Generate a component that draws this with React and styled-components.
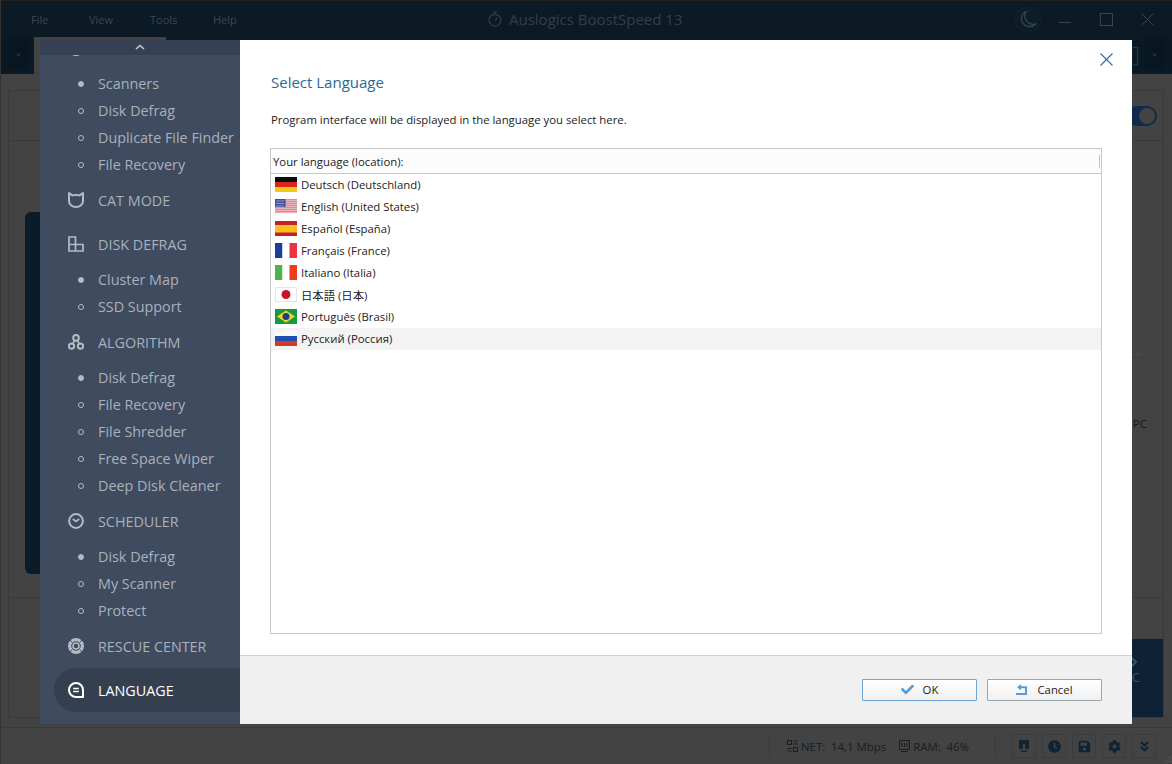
import React from "react";
import styled, { createGlobalStyle } from "styled-components";
import { FaClock, FaSave, FaCog, FaAngleDoubleDown, FaCheck } from "react-icons/fa";

const Global = createGlobalStyle`
  html, body { margin: 0; padding: 0; background: #434343; }
  * { box-sizing: border-box; }
  body { font-family: "Open Sans", "Noto Sans CJK JP", sans-serif; }
`;

const Page = styled.div`
  position: relative;
  width: 1172px;
  height: 764px;
  overflow: hidden;
  display: flex;
  flex-direction: column;
  background: #434343;
  border-left: 1px solid #333;
`;

/* ---------- dimmed application behind the dialog ---------- */
const TitleBar = styled.header`
  height: 37px;
  flex: none;
  display: flex;
  align-items: center;
  background: #0b1a24;
  border-top: 1px solid #222;
  position: relative;
`;
const Menu = styled.nav`
  display: flex;
  padding-left: 30px;
  font-size: 11px;
  color: #3a4850;
`;
const MenuItem = styled.span`
  width: ${(p) => p.$w}px;
`;
const AppTitle = styled.div`
  position: absolute;
  left: 487px;
  top: 8px;
  display: flex;
  align-items: center;
  gap: 7px;
  font-size: 15px;
  color: #333f47;
  svg { flex: none; }
`;
const WinControls = styled.div`
  margin-left: auto;
  display: flex;
  align-items: center;
  padding-right: 18px;
  color: #38454d;
`;
const WinIcon = styled.svg`
  margin-left: ${(p) => p.$ml || 0}px;
`;
const Toolbar = styled.div`
  height: 37px;
  flex: none;
  display: flex;
  align-items: stretch;
  background: #0a1924;
  padding-left: 7px;
`;
const ToolEnd = styled.div`
  width: 20px;
  height: 33px;
  background: #071621;
  display: flex;
  align-items: center;
  justify-content: center;
  color: #26323a;
  font-size: 8px;
`;
const ActiveTab = styled.div`
  width: 132px;
  margin-left: 6px;
  background: #434343;
`;
const ToolGrow = styled.div`
  flex: 1;
  display: flex;
  justify-content: flex-end;
  align-items: flex-start;
  padding: 9px 5px 0 0;
  color: #1f3646;
`;
const ToolRight = styled(ToolEnd)`
  width: 21px;
  margin-right: 7px;
`;
const Content = styled.main`
  flex: 1;
  min-height: 0;
  padding: 16px 8px 9px 7px;
  display: flex;
`;
const Panel = styled.div`
  flex: 1;
  border: 1px solid #3a3a3a;
  display: flex;
  flex-direction: column;
`;
const PanelTop = styled.div`
  height: 50px;
  flex: none;
  border-bottom: 1px solid #3a3a3a;
  display: flex;
  justify-content: flex-end;
  align-items: flex-start;
  padding: 15px 6px 0 0;
`;
const Toggle = styled.div`
  width: 30px;
  height: 20px;
  border-radius: 10px;
  background: #0f2a4a;
  position: relative;
  &::after {
    content: "";
    position: absolute;
    right: 2px;
    top: 2px;
    width: 16px;
    height: 16px;
    border-radius: 50%;
    background: #434343;
  }
`;
const PanelMid = styled.div`
  flex: 1;
  border-bottom: 1px solid #3a3a3a;
  display: flex;
  justify-content: space-between;
  padding: 71px 16px 23px 16px;
`;
const DarkCard = styled.div`
  width: 300px;
  border-radius: 6px;
  background: #0b1c28;
`;
const RightCol = styled.div`
  display: flex;
  flex-direction: column;
  align-items: flex-end;
`;
const MidRule = styled.span`
  width: 8px;
  height: 1px;
  margin: 142px 6px 0 0;
  background: #4f4f4f;
`;
const PcLabel = styled.div`
  font-size: 11.5px;
  line-height: 16px;
  color: #15191c;
  margin-top: 61px;
`;
const PanelBottom = styled.div`
  height: 119px;
  flex: none;
  display: flex;
  justify-content: flex-end;
  align-items: flex-end;
`;
const BlueTile = styled.div`
  width: 131px;
  height: 78px;
  background: #0f2235;
  display: flex;
  flex-direction: column;
  align-items: flex-end;
  padding: 17px 23px 0 0;
  color: #3c5064;
  font-size: 13px;
  line-height: 18px;
`;
const StatusBar = styled.footer`
  height: 37px;
  flex: none;
  border-top: 1px solid #3a3a3a;
  display: flex;
  align-items: center;
  justify-content: flex-end;
  padding-right: 16px;
  font-size: 11.4px;
  color: #131e26;
  position: relative;
`;
const StatDivider = styled.span`
  width: 1px;
  height: 26px;
  background: #3a3a3a;
  margin-right: ${(p) => p.$mr}px;
`;
const Stat = styled.span`
  display: flex;
  align-items: center;
  gap: 3px;
  margin-right: ${(p) => p.$mr}px;
  svg { flex: none; }
`;
const StatusButtons = styled.div`
  display: flex;
  gap: 6px;
`;
const StatusButton = styled.span`
  width: 24px;
  height: 24px;
  border: 1px solid #3b3b3b;
  border-radius: 2px;
  display: flex;
  align-items: center;
  justify-content: center;
  color: #0e2434;
  font-size: 13px;
`;
const Grip = styled.svg`
  position: absolute;
  right: 0;
  bottom: 1px;
`;

/* ---------- dialog ---------- */
const Dialog = styled.section`
  position: absolute;
  left: 39px;
  top: 40px;
  width: 1092px;
  height: 684px;
  display: flex;
`;
const Sidebar = styled.aside`
  width: 200px;
  flex: none;
  background: #3f4b5e;
  display: flex;
  flex-direction: column;
`;
const ScrollStrip = styled.div`
  height: 15px;
  flex: none;
  background: #364253;
  display: flex;
  justify-content: center;
  padding-top: 4px;
`;
const SideScroll = styled.div`
  flex: 1;
  min-height: 0;
  overflow: hidden;
`;
const SideList = styled.div`
  margin-top: -29px;
`;
const Heading = styled.div`
  height: 44px;
  display: flex;
  align-items: center;
  margin-left: ${(p) => (p.$active ? 14 : 0)}px;
  padding-left: ${(p) => (p.$active ? 14 : 28)}px;
  gap: 14px;
  font-size: 14.35px;
  color: ${(p) => (p.$active ? "#ffffff" : "#a9b1bd")};
  background: ${(p) => (p.$active ? "#343f4f" : "transparent")};
  border-radius: ${(p) => (p.$active ? "22px 0 0 22px" : "0")};
  svg { flex: none; }
`;
const SubItem = styled.div`
  height: 27px;
  display: flex;
  align-items: center;
  padding-left: 38px;
  gap: 14px;
  font-size: 14.35px;
  color: #a9b1bd;
`;
const Dot = styled.i`
  width: 6px;
  height: 6px;
  flex: none;
  border-radius: 50%;
  border: 1px solid #b4bbc6;
  background: ${(p) => (p.$filled ? "#b4bbc6" : "transparent")};
`;
const Main = styled.div`
  flex: 1;
  min-width: 0;
  display: flex;
  flex-direction: column;
  background: #ffffff;
  position: relative;
`;
const CloseBtn = styled.svg`
  position: absolute;
  right: 19px;
  top: 13px;
`;
const Body = styled.div`
  flex: 1;
  min-height: 0;
  padding: 31px 30px 21px 30px;
  display: flex;
  flex-direction: column;
`;
const Title = styled.h1`
  margin: 0 0 0 1px;
  font-size: 15px;
  line-height: 22px;
  font-weight: 400;
  color: #2a6a96;
`;
const Lead = styled.p`
  margin: 19px 0 20px 1px;
  font-size: 11.35px;
  line-height: 16px;
  color: #222222;
`;
const ListBox = styled.div`
  flex: 1;
  min-height: 0;
  border: 1px solid #c8c8c8;
  display: flex;
  flex-direction: column;
`;
const ListHead = styled.div`
  height: 25px;
  flex: none;
  padding-left: 2px;
  display: flex;
  align-items: center;
  justify-content: space-between;
  font-size: 11.35px;
  color: #222222;
  background: #fcfcfc;
  border-bottom: 1px solid #c8c8c8;
`;
const HeadGrip = styled.i`
  width: 1px;
  height: 13px;
  background: #c4c4c4;
  margin: 0 1px 0 0;
`;
const Row = styled.div`
  height: 22px;
  display: flex;
  align-items: center;
  gap: 4px;
  padding: 0 0 1px 4px;
  font-size: 11.35px;
  color: #222222;
  background: ${(p) => (p.$selected ? "#f3f3f3" : "transparent")};
  svg { flex: none; }
`;
const Footer = styled.div`
  height: 69px;
  flex: none;
  background: #f0f0f0;
  border-top: 1px solid #d2d2d2;
  display: flex;
  justify-content: flex-end;
  padding: 23px 30px 0 0;
  gap: 10px;
`;
const Button = styled.button`
  width: 115px;
  height: 22px;
  padding: 0 0 2px;
  border: 1px solid ${(p) => (p.$primary ? "#6ea6d6" : "#9aa6b0")};
  border-radius: 1px;
  background: linear-gradient(#ffffff, #f0f0f0);
  display: flex;
  align-items: center;
  justify-content: center;
  gap: ${(p) => (p.$primary ? 9 : 10)}px;
  font-family: inherit;
  font-size: 11.35px;
  color: #222222;
  svg { flex: none; color: #5b9bd5; }
`;

/* ---------- drawings ---------- */
const Flag = ({ children }) => (
  <svg width="22" height="15" viewBox="0 0 22 15">{children}</svg>
);
const H3 = ({ a, b, c }) => (
  <Flag>
    <rect width="22" height="5" fill={a} />
    <rect y="5" width="22" height="5" fill={b} />
    <rect y="10" width="22" height="5" fill={c} />
  </Flag>
);
const V3 = ({ a, b, c }) => (
  <Flag>
    <rect width="7.5" height="15" fill={a} />
    <rect x="7.5" width="7" height="15" fill={b} />
    <rect x="14.5" width="7.5" height="15" fill={c} />
  </Flag>
);
const FlagDE = () => <H3 a="#0c0c0c" b="#d9261c" c="#f6c61a" />;
const FlagUS = () => (
  <Flag>
    <rect width="22" height="15" fill="#f4f4f6" />
    {[0, 2, 4, 6, 8, 10, 12].map((y) => (
      <rect key={y} y={y + 0.3} width="22" height="1.15" fill="#d5606e" />
    ))}
    <rect width="10.5" height="8" fill="#3f4f96" />
    {[1, 3, 5, 7].map((x) =>
      [1.5, 4, 6.5].map((y) => <rect key={`${x}${y}`} x={x + 0.5} y={y} width="1" height="1" fill="#e8ebf5" />)
    )}
  </Flag>
);
const FlagES = () => (
  <Flag>
    <rect width="22" height="15" fill="#c8202a" />
    <rect y="4" width="22" height="7.5" fill="#f7c01d" />
  </Flag>
);
const FlagFR = () => <V3 a="#1b3e9c" b="#ffffff" c="#ea3340" />;
const FlagIT = () => <V3 a="#4fb24f" b="#ffffff" c="#ef3a1c" />;
const FlagJP = () => (
  <Flag>
    <rect x="0.5" y="0.5" width="21" height="14" fill="#ffffff" stroke="#e6e6e6" />
    <circle cx="11" cy="7.5" r="4.5" fill="#c4122f" />
  </Flag>
);
const FlagBR = () => (
  <Flag>
    <rect width="22" height="15" fill="#159a45" />
    <path d="M11 1.5 20 7.5 11 13.5 2 7.5Z" fill="#f7d51d" />
    <circle cx="11" cy="7.5" r="3.5" fill="#1f3d8f" />
  </Flag>
);
const FlagRU = () => <H3 a="#fafafa" b="#1f4fb0" c="#d2392b" />;

const Ic = ({ children, color = "#b4bbc6" }) => (
  <svg width="16" height="16" viewBox="0 0 16 16" fill="none" stroke={color} strokeWidth="2">
    {children}
  </svg>
);
const CatIcon = () => (
  <Ic>
    <path d="M1 1 4.4 3.4C6.5 2.9 9.5 2.9 11.6 3.4L15 1V9A7 6 0 0 1 1 9Z" strokeLinejoin="round" />
  </Ic>
);
const DefragIcon = () => (
  <Ic>
    <path d="M1 1h6.5v14H1ZM1 8.5h14V15H1ZM7.5 8.5V15" strokeWidth="1.7" />
  </Ic>
);
const AlgoIcon = () => (
  <Ic>
    <circle cx="8" cy="3.9" r="2.8" strokeWidth="2" />
    <circle cx="3.5" cy="12.1" r="2.7" strokeWidth="2" />
    <circle cx="12.5" cy="12.1" r="2.7" strokeWidth="2" />
    <path d="M6.6 6.4 5 9.4M9.4 6.4 11 9.4" strokeWidth="1.6" />
  </Ic>
);
const ClockIcon = () => (
  <Ic>
    <circle cx="8" cy="8" r="6.9" />
    <path d="M4.8 6 8 8.4 11.2 6" strokeWidth="1.7" />
  </Ic>
);
const RescueIcon = () => (
  <Ic>
    <circle cx="8" cy="8" r="6.4" strokeWidth="3.2" />
    <circle cx="8" cy="8" r="3" strokeWidth="1.6" />
    <path d="M2.2 2.2 4 4M13.8 2.2 12 4M2.2 13.8 4 12M13.8 13.8 12 12" stroke="#3f4b5e" strokeWidth="1" />
  </Ic>
);
const LangIcon = () => (
  <Ic color="#ffffff">
    <path d="M15 15H8A7 7 0 1 1 15 8Z" strokeWidth="2" strokeLinejoin="round" />
    <path d="M5.2 6.6h5.6M5.2 9.6h5.6" strokeWidth="1.5" />
  </Ic>
);
const Stopwatch = () => (
  <svg width="14" height="16" viewBox="0 0 14 16" fill="none" stroke="#333f47" strokeWidth="1.2">
    <circle cx="7" cy="9.2" r="5.9" />
    <path d="M4.8 1h4.4M7 1v2.2M7 9.5 9.4 6.6" />
  </svg>
);

const nav = [
  { t: "h", icon: <RescueIcon />, label: "" },
  { t: "s", label: "Scanners", on: true },
  { t: "s", label: "Disk Defrag" },
  { t: "s", label: "Duplicate File Finder" },
  { t: "s", label: "File Recovery" },
  { t: "h", icon: <CatIcon />, label: "CAT MODE" },
  { t: "h", icon: <DefragIcon />, label: "DISK DEFRAG" },
  { t: "s", label: "Cluster Map", on: true },
  { t: "s", label: "SSD Support" },
  { t: "h", icon: <AlgoIcon />, label: "ALGORITHM" },
  { t: "s", label: "Disk Defrag", on: true },
  { t: "s", label: "File Recovery" },
  { t: "s", label: "File Shredder" },
  { t: "s", label: "Free Space Wiper" },
  { t: "s", label: "Deep Disk Cleaner" },
  { t: "h", icon: <ClockIcon />, label: "SCHEDULER" },
  { t: "s", label: "Disk Defrag", on: true },
  { t: "s", label: "My Scanner" },
  { t: "s", label: "Protect" },
  { t: "h", icon: <RescueIcon />, label: "RESCUE CENTER" },
  { t: "h", icon: <LangIcon />, label: "LANGUAGE", active: true },
];

const langs = [
  [<FlagDE />, "Deutsch (Deutschland)"],
  [<FlagUS />, "English (United States)"],
  [<FlagES />, "Español (España)"],
  [<FlagFR />, "Français (France)"],
  [<FlagIT />, "Italiano (Italia)"],
  [<FlagJP />, "日本語 (日本)"],
  [<FlagBR />, "Português (Brasil)"],
  [<FlagRU />, "Русский (Россия)"],
];

export default function App() {
  return (
    <Page>
      <Global />
      <TitleBar>
        <Menu>
          <MenuItem $w={58}>File</MenuItem>
          <MenuItem $w={61}>View</MenuItem>
          <MenuItem $w={63}>Tools</MenuItem>
          <MenuItem $w={40}>Help</MenuItem>
        </Menu>
        <AppTitle>
          <Stopwatch />
          Auslogics BoostSpeed 13
        </AppTitle>
        <WinControls>
          <WinIcon width="28" height="28" viewBox="0 0 28 28" fill="none" stroke="currentColor" strokeWidth="1.2">
            <circle cx="14" cy="14" r="14" fill="#0e1e29" stroke="none" />
            <path d="M12 6.5A8 8 0 1 0 21.5 19 8.5 8.5 0 0 1 12 6.5Z" />
          </WinIcon>
          <WinIcon $ml={17} width="12" height="12" viewBox="0 0 12 12" stroke="currentColor"><path d="M0 9.5h12" /></WinIcon>
          <WinIcon $ml={29} width="13" height="13" viewBox="0 0 13 13" fill="none" stroke="currentColor"><rect x=".5" y=".5" width="12" height="12" /></WinIcon>
          <WinIcon $ml={28} width="13" height="13" viewBox="0 0 13 13" stroke="currentColor"><path d="M.5.5l12 12M12.5.5l-12 12" /></WinIcon>
        </WinControls>
      </TitleBar>
      <Toolbar>
        <ToolEnd>◂</ToolEnd>
        <ActiveTab />
        <ToolGrow>
          <svg width="9" height="20" viewBox="0 0 9 20" fill="none" stroke="currentColor" strokeWidth="1.5"><path d="M0 1.5h9M1.5 2v17h6V2" /></svg>
        </ToolGrow>
        <ToolRight>▸</ToolRight>
      </Toolbar>
      <Content>
        <Panel>
          <PanelTop><Toggle /></PanelTop>
          <PanelMid>
            <DarkCard />
            <RightCol>
              <MidRule />
              <PcLabel>PC</PcLabel>
            </RightCol>
          </PanelMid>
          <PanelBottom>
            <BlueTile>
              <svg width="12" height="12" viewBox="0 0 12 12" fill="none" stroke="currentColor" strokeWidth="2"><path d="M3 1 8 6 3 11" /></svg>
              C
            </BlueTile>
          </PanelBottom>
        </Panel>
      </Content>
      <StatusBar>
        <StatDivider $mr={17} />
        <Stat $mr={13}>
          <svg width="11" height="12" viewBox="0 0 11 12" fill="none" stroke="currentColor"><path d="M.5.5h4v4h-4zM6.5 7.5h4v4h-4zM.5 8.5h4M.5 11h4M6.5 1h4M6.5 4h4" /></svg>
          NET:&nbsp; 14,1 Mbps
        </Stat>
        <Stat $mr={26}>
          <svg width="11" height="12" viewBox="0 0 11 12" fill="none" stroke="currentColor"><path d="M.5.5h10v9H.5zM3 3v4M5.5 3v4M8 3v4M2 11.5h7" /></svg>
          RAM:&nbsp; 46%
        </Stat>
        <StatDivider $mr={16} />
        <StatusButtons>
          <StatusButton>
            <svg width="12" height="12" viewBox="0 0 12 12" fill="currentColor"><path d="M1 0h10v9H7.4V8h-.2V4H4.8v4h-.2v1H1zM4.8 1.5h2.4v1.5H4.8zM3 10.5h6V12H3z" /></svg>
          </StatusButton>
          <StatusButton><FaClock /></StatusButton>
          <StatusButton><FaSave /></StatusButton>
          <StatusButton><FaCog /></StatusButton>
          <StatusButton><FaAngleDoubleDown /></StatusButton>
        </StatusButtons>
        <Grip width="8" height="8" viewBox="0 0 8 8" stroke="#555"><path d="M8 0 0 8M8 3 3 8M8 6 6 8" /></Grip>
      </StatusBar>

      <Dialog>
        <Sidebar>
          <ScrollStrip>
            <svg width="10" height="6" viewBox="0 0 10 6" fill="none" stroke="#c4cad3" strokeWidth="1.6"><path d="M1 5 5 1.5 9 5" /></svg>
          </ScrollStrip>
          <SideScroll>
            <SideList>
              {nav.map((n, i) =>
                n.t === "h" ? (
                  <Heading key={i} $active={n.active}>{n.icon}{n.label}</Heading>
                ) : (
                  <SubItem key={i}><Dot $filled={n.on} />{n.label}</SubItem>
                )
              )}
            </SideList>
          </SideScroll>
        </Sidebar>
        <Main>
          <CloseBtn width="13" height="13" viewBox="0 0 13 13" stroke="#2f6ca8" strokeWidth="1.1"><path d="M.5.5l12 12M12.5.5l-12 12" /></CloseBtn>
          <Body>
            <Title>Select Language</Title>
            <Lead>Program interface will be displayed in the language you select here.</Lead>
            <ListBox>
              <ListHead>Your language (location):<HeadGrip /></ListHead>
              <div>
                {langs.map(([f, l], i) => (
                  <Row key={i} $selected={i === 7}>{f}{l}</Row>
                ))}
              </div>
            </ListBox>
          </Body>
          <Footer>
            <Button $primary><FaCheck size={13} />OK</Button>
            <Button>
              <svg width="11" height="11" viewBox="0 0 11 11" fill="currentColor"><path d="M5 0v2.2H11V11H0V9H9V4.2H5v2.2L1.2 3.2Z" /></svg>
              Cancel
            </Button>
          </Footer>
        </Main>
      </Dialog>
    </Page>
  );
}
